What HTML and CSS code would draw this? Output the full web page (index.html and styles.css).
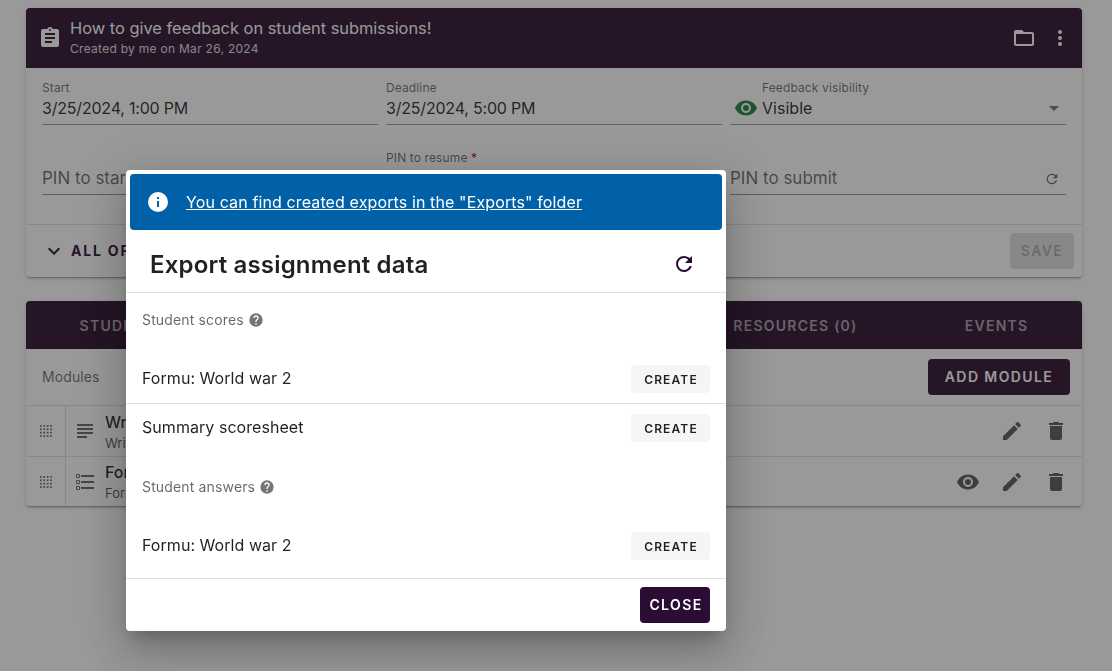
FILE: index.html
```html
<!DOCTYPE html>
<html lang="en">
<head>
<meta charset="utf-8">
<title>Export assignment data</title>
<link rel="stylesheet" href="styles.css">
</head>
<body>
<main class="page">
  <section class="card">
    <header class="card-head">
      <svg class="ic ic-24" viewBox="0 0 24 24"><path d="M17,9H7V7H17M17,13H7V11H17M14,17H7V15H14M12,3A1,1 0 0,1 13,4A1,1 0 0,1 12,5A1,1 0 0,1 11,4A1,1 0 0,1 12,3M19,3H14.82C14.4,1.84 13.3,1 12,1C10.7,1 9.6,1.84 9.18,3H5A2,2 0 0,0 3,5V19A2,2 0 0,0 5,21H19A2,2 0 0,0 21,19V5A2,2 0 0,0 19,3Z"/></svg>
      <div class="head-text">
        <div class="head-title">How to give feedback on student submissions!</div>
        <div class="head-sub">Created by me on Mar 26, 2024</div>
      </div>
      <svg class="ic ic-24 head-folder" viewBox="0 0 24 24"><path d="M20,18H4V8H20M20,6H12L10,4H4C2.89,4 2,4.89 2,6V18A2,2 0 0,0 4,20H20A2,2 0 0,0 22,18V8C22,6.89 21.1,6 20,6Z"/></svg>
      <svg class="ic ic-24 head-dots" viewBox="0 0 24 24"><path d="M12,16A2,2 0 0,1 14,18A2,2 0 0,1 12,20A2,2 0 0,1 10,18A2,2 0 0,1 12,16M12,10A2,2 0 0,1 14,12A2,2 0 0,1 12,14A2,2 0 0,1 10,12A2,2 0 0,1 12,10M12,4A2,2 0 0,1 14,6A2,2 0 0,1 12,8A2,2 0 0,1 10,6A2,2 0 0,1 12,4Z"/></svg>
    </header>
    <div class="fields">
      <div class="field"><span class="f-label">Start</span><div class="f-value f-date">3/25/2024, 1:00 PM</div></div>
      <div class="field"><span class="f-label">Deadline</span><div class="f-value f-date">3/25/2024, 5:00 PM</div></div>
      <div class="field field-select">
        <svg class="ic ic-24 eye-green" viewBox="0 0 24 24"><path d="M12,9A3,3 0 0,0 9,12A3,3 0 0,0 12,15A3,3 0 0,0 15,12A3,3 0 0,0 12,9M12,17A5,5 0 0,1 7,12A5,5 0 0,1 12,7A5,5 0 0,1 17,12A5,5 0 0,1 12,17M12,4.5C7,4.5 2.73,7.61 1,12C2.73,16.39 7,19.5 12,19.5C17,19.5 21.27,16.39 23,12C21.27,7.61 17,4.5 12,4.5Z"/></svg>
        <div class="select-body"><span class="f-label">Feedback visibility</span><div class="f-value">Visible</div></div>
        <svg class="ic ic-24 caret" viewBox="0 0 24 24"><path d="M7,10L12,15L17,10H7Z"/></svg>
      </div>
      <div class="field"><span class="f-label">&nbsp;</span><div class="f-value f-hint">PIN to start</div></div>
      <div class="field"><span class="f-label">PIN to resume <b class="req">*</b></span><div class="f-value">&nbsp;</div></div>
      <div class="field field-pin"><span class="f-label">&nbsp;</span><div class="f-value f-hint">PIN to submit</div>
        <svg class="ic pin-refresh" viewBox="0 0 24 24"><path d="M17.65,6.35C16.2,4.9 14.21,4 12,4A8,8 0 0,0 4,12A8,8 0 0,0 12,20C15.73,20 18.84,17.45 19.73,14H17.65C16.83,16.33 14.61,18 12,18A6,6 0 0,1 6,12A6,6 0 0,1 12,6C13.66,6 15.14,6.69 16.22,7.78L13,11H20V4L17.65,6.35Z"/></svg>
      </div>
    </div>
    <footer class="card-foot">
      <div class="opts">
        <svg class="ic ic-24" viewBox="0 0 24 24"><path d="M7.41,8.58L12,13.17L16.59,8.58L18,10L12,16L6,10L7.41,8.58Z"/></svg>
        <span>ALL OPTIONS</span>
      </div>
      <button class="btn-save" type="button">SAVE</button>
    </footer>
  </section>

  <section class="card card-modules">
    <nav class="tabs">
      <span class="tab">STUDENTS</span>
      <span class="tab">MODULES (2)</span>
      <span class="tab">SUBMISSIONS (0)</span>
      <span class="tab">RESOURCES (0)</span>
      <span class="tab">EVENTS</span>
    </nav>
    <div class="mod-tools">
      <span class="mod-label">Modules</span>
      <button class="btn-add" type="button">ADD MODULE</button>
    </div>
    <div class="mod-row">
      <div class="mod-drag"><svg class="ic grip" viewBox="0 0 12 12"><rect x="0" y="0" width="1.7" height="1.7"/><rect x="3.4" y="0" width="1.7" height="1.7"/><rect x="6.8" y="0" width="1.7" height="1.7"/><rect x="10.2" y="0" width="1.7" height="1.7"/><rect x="0" y="3.4" width="1.7" height="1.7"/><rect x="3.4" y="3.4" width="1.7" height="1.7"/><rect x="6.8" y="3.4" width="1.7" height="1.7"/><rect x="10.2" y="3.4" width="1.7" height="1.7"/><rect x="0" y="6.8" width="1.7" height="1.7"/><rect x="3.4" y="6.8" width="1.7" height="1.7"/><rect x="6.8" y="6.8" width="1.7" height="1.7"/><rect x="10.2" y="6.8" width="1.7" height="1.7"/><rect x="0" y="10.2" width="1.7" height="1.7"/><rect x="3.4" y="10.2" width="1.7" height="1.7"/><rect x="6.8" y="10.2" width="1.7" height="1.7"/><rect x="10.2" y="10.2" width="1.7" height="1.7"/></svg></div>
      <svg class="ic ic-24 mod-type" viewBox="0 0 24 24"><path d="M4,5H20V7H4V5M4,9H20V11H4V9M4,13H20V15H4V13M4,17H14V19H4V17Z"/></svg>
      <div class="mod-text"><div class="mod-name">Written feedback</div><div class="mod-kind">Writing</div></div>
      <div class="mod-actions">
        <svg class="ic ic-24" viewBox="0 0 24 24"><path d="M20.71,7.04C21.1,6.65 21.1,6 20.71,5.63L18.37,3.29C18,2.9 17.35,2.9 16.96,3.29L15.12,5.12L18.87,8.87M3,17.25V21H6.75L17.81,9.93L14.06,6.18L3,17.25Z"/></svg>
        <svg class="ic ic-24" viewBox="0 0 24 24"><path d="M19,4H15.5L14.5,3H9.5L8.5,4H5V6H19M6,19A2,2 0 0,0 8,21H16A2,2 0 0,0 18,19V7H6V19Z"/></svg>
      </div>
    </div>
    <div class="mod-row">
      <div class="mod-drag"><svg class="ic grip" viewBox="0 0 12 12"><rect x="0" y="0" width="1.7" height="1.7"/><rect x="3.4" y="0" width="1.7" height="1.7"/><rect x="6.8" y="0" width="1.7" height="1.7"/><rect x="10.2" y="0" width="1.7" height="1.7"/><rect x="0" y="3.4" width="1.7" height="1.7"/><rect x="3.4" y="3.4" width="1.7" height="1.7"/><rect x="6.8" y="3.4" width="1.7" height="1.7"/><rect x="10.2" y="3.4" width="1.7" height="1.7"/><rect x="0" y="6.8" width="1.7" height="1.7"/><rect x="3.4" y="6.8" width="1.7" height="1.7"/><rect x="6.8" y="6.8" width="1.7" height="1.7"/><rect x="10.2" y="6.8" width="1.7" height="1.7"/><rect x="0" y="10.2" width="1.7" height="1.7"/><rect x="3.4" y="10.2" width="1.7" height="1.7"/><rect x="6.8" y="10.2" width="1.7" height="1.7"/><rect x="10.2" y="10.2" width="1.7" height="1.7"/></svg></div>
      <svg class="ic ic-24 mod-type" viewBox="0 0 24 24"><path d="M21,19V17H8V19H21M21,13V11H8V13H21M8,7H21V5H8V7M4,5V7H6V5H4M3,5A1,1 0 0,1 4,4H6A1,1 0 0,1 7,5V7A1,1 0 0,1 6,8H4A1,1 0 0,1 3,7V5M4,11V13H6V11H4M3,11A1,1 0 0,1 4,10H6A1,1 0 0,1 7,11V13A1,1 0 0,1 6,14H4A1,1 0 0,1 3,13V11M4,17V19H6V17H4M3,17A1,1 0 0,1 4,16H6A1,1 0 0,1 7,17V19A1,1 0 0,1 6,20H4C3.45,20 3,19.55 3,19V17Z"/></svg>
      <div class="mod-text"><div class="mod-name">Formu: World war 2</div><div class="mod-kind">Formu</div></div>
      <div class="mod-actions">
        <svg class="ic ic-24" viewBox="0 0 24 24"><path d="M12,9A3,3 0 0,0 9,12A3,3 0 0,0 12,15A3,3 0 0,0 15,12A3,3 0 0,0 12,9M12,17A5,5 0 0,1 7,12A5,5 0 0,1 12,7A5,5 0 0,1 17,12A5,5 0 0,1 12,17M12,4.5C7,4.5 2.73,7.61 1,12C2.73,16.39 7,19.5 12,19.5C17,19.5 21.27,16.39 23,12C21.27,7.61 17,4.5 12,4.5Z"/></svg>
        <svg class="ic ic-24" viewBox="0 0 24 24"><path d="M20.71,7.04C21.1,6.65 21.1,6 20.71,5.63L18.37,3.29C18,2.9 17.35,2.9 16.96,3.29L15.12,5.12L18.87,8.87M3,17.25V21H6.75L17.81,9.93L14.06,6.18L3,17.25Z"/></svg>
        <svg class="ic ic-24" viewBox="0 0 24 24"><path d="M19,4H15.5L14.5,3H9.5L8.5,4H5V6H19M6,19A2,2 0 0,0 8,21H16A2,2 0 0,0 18,19V7H6V19Z"/></svg>
      </div>
    </div>
  </section>
</main>

<div class="scrim"></div>

<div class="dialog" role="dialog">
  <div class="alert">
    <svg class="ic ic-24" viewBox="0 0 24 24"><path d="M13,9H11V7H13M13,17H11V11H13M12,2A10,10 0 0,0 2,12A10,10 0 0,0 12,22A10,10 0 0,0 22,12A10,10 0 0,0 12,2Z"/></svg>
    <a class="alert-link" href="#">You can find created exports in the "Exports" folder</a>
  </div>
  <div class="dlg-title">
    <h2>Export assignment data</h2>
    <svg class="ic ic-24 dlg-refresh" viewBox="0 0 24 24"><path d="M17.65,6.35C16.2,4.9 14.21,4 12,4A8,8 0 0,0 4,12A8,8 0 0,0 12,20C15.73,20 18.84,17.45 19.73,14H17.65C16.83,16.33 14.61,18 12,18A6,6 0 0,1 6,12A6,6 0 0,1 12,6C13.66,6 15.14,6.69 16.22,7.78L13,11H20V4L17.65,6.35Z"/></svg>
  </div>
  <div class="dlg-body">
    <div class="sec-head"><span class="sec-text">Student scores</span>
      <svg class="ic help" viewBox="0 0 24 24"><path d="M15.07,11.25L14.17,12.17C13.45,12.89 13,13.5 13,15H11V14.5C11,13.39 11.45,12.39 12.17,11.67L13.41,10.41C13.78,10.05 14,9.55 14,9C14,7.89 13.1,7 12,7A2,2 0 0,0 10,9H8A4,4 0 0,1 12,5A4,4 0 0,1 16,9C16,9.88 15.64,10.67 15.07,11.25M13,19H11V17H13M12,2A10,10 0 0,0 2,12A10,10 0 0,0 12,22A10,10 0 0,0 22,12A10,10 0 0,0 12,2Z"/></svg>
    </div>
    <div class="exp-row exp-row-line"><span class="exp-name">Formu: World war 2</span><button class="btn-create" type="button">CREATE</button></div>
    <div class="exp-row"><span class="exp-name">Summary scoresheet</span><button class="btn-create" type="button">CREATE</button></div>
    <div class="sec-head sec-head-2"><span class="sec-text">Student answers</span>
      <svg class="ic help" viewBox="0 0 24 24"><path d="M15.07,11.25L14.17,12.17C13.45,12.89 13,13.5 13,15H11V14.5C11,13.39 11.45,12.39 12.17,11.67L13.41,10.41C13.78,10.05 14,9.55 14,9C14,7.89 13.1,7 12,7A2,2 0 0,0 10,9H8A4,4 0 0,1 12,5A4,4 0 0,1 16,9C16,9.88 15.64,10.67 15.07,11.25M13,19H11V17H13M12,2A10,10 0 0,0 2,12A10,10 0 0,0 12,22A10,10 0 0,0 22,12A10,10 0 0,0 12,2Z"/></svg>
    </div>
    <div class="exp-row"><span class="exp-name">Formu: World war 2</span><button class="btn-create" type="button">CREATE</button></div>
  </div>
  <div class="dlg-foot"><button class="btn-close" type="button">CLOSE</button></div>
</div>
</body>
</html>
```
FILE: styles.css
```css
* { box-sizing: border-box; }
html, body { margin: 0; height: 100%; overflow: hidden; }
body {
  background: #fff;
  color: rgba(0,0,0,.87);
  font-family: "Inter", "Lato", "Liberation Sans", sans-serif;
  font-size: 16px;
}
button { font-family: inherit; border: 0; cursor: pointer; }
.ic { display: block; fill: currentColor; flex: none; }
.ic-24 { width: 24px; height: 24px; }

.page { padding: 8px 30px 0 26px; }
.card {
  border-radius: 4px;
  background: #fff;
  box-shadow: 0 3px 1px -2px rgba(0,0,0,.2), 0 2px 2px 0 rgba(0,0,0,.14), 0 1px 5px 0 rgba(0,0,0,.12);
}
.card-modules { margin-top: 24px; }

.card-head {
  display: flex;
  align-items: center;
  height: 60px;
  padding: 0 10px 0 12px;
  background: #290c2c;
  border-radius: 4px 4px 0 0;
  color: #fff;
}
.head-text { margin-left: 8px; flex: 1; min-width: 0; }
.head-title { font-size: 16.4px; line-height: 22px; margin-top: -1px; }
.head-sub { font-size: 12px; line-height: 18px; margin-top: 1px; letter-spacing: .28px; opacity: .85; }
.head-folder { margin-right: 12px; }

.fields {
  display: grid;
  grid-template-columns: repeat(3, 336px);
  grid-auto-rows: 70px;
  column-gap: 8px;
  padding: 12px 16px 0;
  height: 157px;
  border-bottom: 1px solid rgba(0,0,0,.12);
}
.field { height: 45px; border-bottom: 1px solid rgba(0,0,0,.42); position: relative; }
.f-label { display: block; font-size: 12px; line-height: 16px; letter-spacing: .12px; color: rgba(0,0,0,.6); }
.f-value { font-size: 16px; line-height: 24px; letter-spacing: .02px; color: rgba(0,0,0,.87); }
.f-date { letter-spacing: -.2px; }
.f-hint { font-size: 17px; letter-spacing: 0; color: rgba(0,0,0,.6); }
.req { color: #b00020; font-weight: 400; }
.field-select { display: flex; align-items: flex-end; }
.eye-green { color: #1a8242; margin: 0 4px 4px 4px; }
.select-body { flex: 1; align-self: stretch; }
.caret { color: rgba(0,0,0,.54); margin-bottom: 4px; }
.pin-refresh { position: absolute; right: 6px; bottom: 7px; width: 16px; height: 16px; color: rgba(0,0,0,.6); }

.card-foot { display: flex; align-items: center; justify-content: space-between; height: 52px; padding: 0 8px 0 16px; }
.opts { display: flex; align-items: center; gap: 5px; font-size: 14px; font-weight: 700; letter-spacing: 1.8px; color: #2a0c34; }
.opts span { margin-bottom: 2px; }
.btn-save {
  width: 64px; height: 36px; border-radius: 4px;
  background: rgba(0,0,0,.12); color: rgba(0,0,0,.26);
  font-size: 14px; font-weight: 600; letter-spacing: 1.4px; padding: 0 0 2px;
}

.tabs { display: flex; height: 48px; background: #290c2c; border-radius: 4px 4px 0 0; }
.tab { flex: 1 1 auto; display: flex; align-items: center; justify-content: center; color: rgba(255,255,255,.6); font-size: 14px; font-weight: 600; letter-spacing: 1.25px; }
.mod-tools { display: flex; align-items: center; justify-content: space-between; height: 56px; padding: 0 12px 0 16px; }
.mod-label { font-size: 14px; letter-spacing: .1px; margin-bottom: 2px; color: rgba(0,0,0,.6); }
.btn-add {
  width: 142px; height: 36px; border-radius: 4px;
  background: #290c2c; color: #fff;
  font-size: 14px; font-weight: 600; letter-spacing: 1.4px; padding: 0 0 2px;
}
.mod-row {
  display: flex; align-items: center; height: 51px;
  border-top: 1px solid rgba(0,0,0,.12);
}
.mod-row + .mod-row { height: 50px; }
.mod-drag { align-self: stretch; width: 40px; display: flex; align-items: center; justify-content: center; border-right: 1px solid rgba(0,0,0,.12); color: rgba(0,0,0,.6); }
.grip { width: 12px; height: 12px; }
.mod-type { margin: 0 8px 0 7px; color: rgba(0,0,0,.6); }
.mod-text { flex: 1; }
.mod-name { font-size: 16px; line-height: 22px; font-weight: 500; margin-bottom: 1px; }
.mod-kind { font-size: 13px; line-height: 18px; color: rgba(0,0,0,.7); }
.mod-actions { display: flex; gap: 20px; padding-right: 14px; color: rgba(0,0,0,.66); }

.scrim { position: fixed; inset: 0; background: rgba(33,33,33,.46); }

.dialog {
  position: fixed; left: 126px; top: 170px; width: 600px; height: 461px;
  background: #fff; border-radius: 4px;
  padding-top: 4px;
  box-shadow: 0 11px 15px -7px rgba(0,0,0,.2), 0 24px 38px 3px rgba(0,0,0,.14), 0 9px 46px 8px rgba(0,0,0,.12);
}
.alert {
  display: flex; align-items: center;
  height: 56px; margin: 0 4px;
  padding: 0 16px;
  background: #0061a8; border-radius: 4px; color: #fff;
}
.alert-link { margin-left: 16px; color: #fff; font-size: 16px; letter-spacing: .12px; text-decoration: underline; }
.dlg-title { display: flex; align-items: center; justify-content: space-between; height: 63px; padding: 5px 30px 0 24px; border-bottom: 1px solid rgba(0,0,0,.12); }
.dlg-title h2 { margin: 2px 0 0; font-size: 24px; font-weight: 600; line-height: 32px; letter-spacing: .18px; color: rgba(0,0,0,.87); }
.dlg-refresh { color: #2a0c34; }
.dlg-body { height: 286px; padding: 0 16px; border-bottom: 1px solid rgba(0,0,0,.12); }
.sec-head { display: flex; align-items: center; gap: 4px; height: 54px; font-size: 14px; color: rgba(0,0,0,.6); }
.sec-text { letter-spacing: .15px; margin-bottom: 2px; }
.sec-head-2 { height: 70px; }
.help { width: 16px; height: 16px; color: rgba(0,0,0,.54); }
.exp-row { display: flex; align-items: center; justify-content: space-between; height: 48px; font-size: 16px; }
.exp-name { margin-bottom: 2px; letter-spacing: .05px; }
.exp-row-line { height: 57px; padding: 8px 16px 0; border-bottom: 1px solid rgba(0,0,0,.12); margin: 0 -16px; }
.btn-create {
  width: 79px; height: 28px; border-radius: 4px;
  background: #f5f5f5; color: rgba(0,0,0,.87);
  font-size: 12px; font-weight: 600; letter-spacing: 1.15px; padding: 0 0 0 1px;
}
.dlg-foot { display: flex; justify-content: flex-end; padding: 8px 16px; }
.btn-close {
  width: 70px; height: 36px; border-radius: 4px;
  background: #2a0c34; color: #fff;
  font-size: 14px; font-weight: 600; letter-spacing: 1.4px; padding: 0 0 2px 2px;
}
```
